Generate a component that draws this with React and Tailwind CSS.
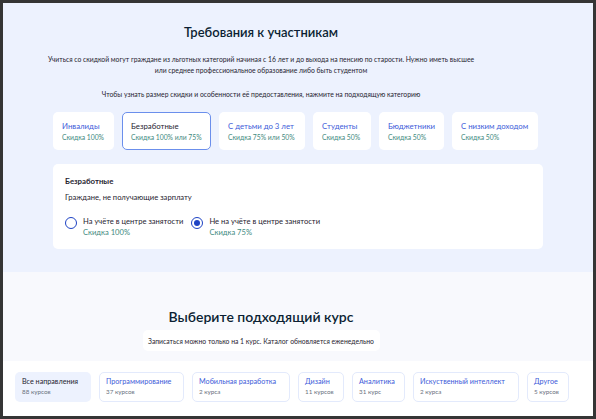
import React from "react";

const categories = [
  { title: "Инвалиды", sub: "Скидка 100%", w: "w-[61px]" },
  { title: "Безработные", sub: "Скидка 100% или 75%", w: "w-[89px]", active: true },
  { title: "С детьми до 3 лет", sub: "Скидка 75% или 50%", w: "w-[86px]" },
  { title: "Студенты", sub: "Скидка 50%", w: "w-[58px]" },
  { title: "Бюджетники", sub: "Скидка 50%", w: "w-[65px]" },
  { title: "С низким доходом", sub: "Скидка 50%", w: "w-[86px]" },
];

const directions = [
  { title: "Все направления", sub: "88 курсов", w: "w-[76px]", active: true },
  { title: "Программирование", sub: "37 курсов", w: "w-[85px]" },
  { title: "Мобильная разработка", sub: "2 курса", w: "w-[98px]" },
  { title: "Дизайн", sub: "11 курсов", w: "w-[46px]" },
  { title: "Аналитика", sub: "31 курс", w: "w-[53px]" },
  { title: "Искуственный интеллект", sub: "2 курса", w: "w-[106px]" },
  { title: "Другое", sub: "5 курсов", w: "w-[42px]" },
];

const Radio = ({ checked, label, sub }) => (
  <div className="flex items-start gap-[6px]">
    <span className="mt-[1px] w-[12px] h-[12px] rounded-full border-[1.5px] border-[#1e43c4] bg-white flex items-center justify-center shrink-0">
      {checked && <span className="w-[6px] h-[6px] rounded-full bg-[#1e43c4]" />}
    </span>
    <div className="flex flex-col">
      <span className="text-[7.6px] leading-[11px] text-[#1f2430]">{label}</span>
      <span className="text-[7.6px] leading-[11px] text-[#3f8a80]">{sub}</span>
    </div>
  </div>
);

const App = () => {
  return (
    <div
      className="w-[596px] h-[419px] bg-[#353535] p-[3px] overflow-hidden"
      style={{ fontFamily: '"Lato", "Open Sans", sans-serif' }}
    >
      <div className="w-full h-full flex flex-col bg-[#f8f9fd] overflow-hidden">
        {/* Requirements */}
        <section className="h-[269px] shrink-0 bg-[#edf2fe] pt-[18px]">
          <div className="pr-[74px] text-center">
            <h2 className="text-[13px] leading-[22px] font-semibold text-[#0b1f33]">
              Требования к участникам
            </h2>
            <p className="mt-[11px] mx-auto w-[430px] text-[6.8px] leading-[11px] text-[#1f2430]">
              Учиться со скидкой могут граждане из льготных категорий начиная с 16 лет и до выхода на пенсию по старости. Нужно иметь высшее или среднее профессиональное образование либо быть студентом
            </p>
            <p className="mt-[13px] text-[6.8px] leading-[11px] text-[#1f2430]">
              Чтобы узнать размер скидки и особенности её предоставления, нажмите на подходящую категорию
            </p>
          </div>

          <div className="px-[50px] mt-[12px]">
            <div className="flex gap-[8px]">
              {categories.map((c) => (
                <div
                  key={c.title}
                  className={`${c.w} h-[38px] rounded-[5px] bg-white flex flex-col justify-center ${
                    c.active ? "border-[1.5px] border-[#6b8fec] pl-[8px]" : "pl-[9px]"
                  }`}
                >
                  <span
                    className={`text-[7.8px] leading-[11px] whitespace-nowrap ${
                      c.active ? "text-[#1f2430]" : "text-[#3d5bd9]"
                    }`}
                  >
                    {c.title}
                  </span>
                  <span className="text-[6.8px] leading-[10px] whitespace-nowrap text-[#3f8a80]">
                    {c.sub}
                  </span>
                </div>
              ))}
            </div>

            <div className="mt-[14px] h-[85px] rounded-[5px] bg-white pl-[12px] pt-[12px]">
              <div className="text-[7.8px] leading-[11px] font-bold text-[#1f2430]">Безработные</div>
              <div className="mt-[5px] text-[7.6px] leading-[11px] text-[#1f2430]">
                Граждане, не получающие зарплату
              </div>
              <div className="mt-[13px] flex gap-[8px]">
                <Radio label="На учёте в центре занятости" sub="Скидка 100%" />
                <Radio checked label="Не на учёте в центре занятости" sub="Скидка 75%" />
              </div>
            </div>
          </div>
        </section>

        {/* Courses */}
        <section className="flex-1 flex flex-col">
          <div className="pr-[74px] flex flex-col items-center pt-[34px]">
            <h2 className="text-[14px] leading-[22px] font-semibold text-[#0b1f33]">
              Выберите подходящий курс
            </h2>
            <div className="mt-[2px] w-[237px] h-[21px] rounded-[5px] bg-white flex items-center justify-center">
              <span className="text-[6.8px] leading-[10px] text-[#1f2430]">
                Записаться можно только на 1 курс. Каталог обновляется еженедельно
              </span>
            </div>
          </div>

          <div className="mt-[10px] flex-1 bg-white pl-[12px] pt-[11px]">
            <div className="flex gap-[8px]">
              {directions.map((d) => (
                <div
                  key={d.title}
                  className={`${d.w} h-[30px] rounded-[5px] flex flex-col justify-center ${
                    d.active ? "bg-[#edf2fe] pl-[7px]" : "border border-[#e3eafc] bg-white pl-[6px]"
                  }`}
                >
                  <span
                    className={`text-[7.2px] leading-[10px] whitespace-nowrap ${
                      d.active ? "text-[#1f2430]" : "text-[#3d5bd9]"
                    }`}
                  >
                    {d.title}
                  </span>
                  <span className="text-[6.3px] leading-[10px] whitespace-nowrap text-[#6b7280]">
                    {d.sub}
                  </span>
                </div>
              ))}
            </div>
          </div>
        </section>
      </div>
    </div>
  );
};

export default App;
